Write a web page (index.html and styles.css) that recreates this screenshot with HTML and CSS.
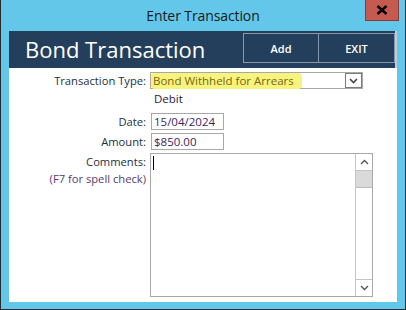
FILE: index.html
```html
<!DOCTYPE html>
<html>
<head>
<meta charset="utf-8">
<link rel="stylesheet" href="styles.css">
</head>
<body>
<div class="window">
  <div class="titlebar">
    <span></span>
    <span class="title">Enter Transaction</span>
    <button class="close" aria-label="Close">
      <svg width="12" height="10" viewBox="0 0 12 10"><path d="M1.5 1 L10.5 9 M10.5 1 L1.5 9" stroke="#000" stroke-width="2.4" fill="none"/></svg>
    </button>
  </div>
  <div class="client">
    <div class="header">
      <h1 class="heading">Bond Transaction</h1>
      <div class="actions">
        <button class="hbtn">Add</button>
        <button class="hbtn">EXIT</button>
      </div>
    </div>
    <div class="form">
      <div class="row row-type">
        <label class="lbl">Transaction Type:</label>
        <div class="combo">
          <span class="combo-val"><span class="hl">Bond Withheld for Arrears</span></span>
          <span class="combo-btn">
            <svg width="9" height="6" viewBox="0 0 9 6"><path d="M1 1 L4.5 4.5 L8 1" stroke="#444" stroke-width="1.6" fill="none"/></svg>
          </span>
        </div>
      </div>
      <div class="row row-debit">
        <span class="lbl"></span>
        <span class="debit">Debit</span>
      </div>
      <div class="row row-date">
        <label class="lbl">Date:</label>
        <div class="tbox">15/04/2024</div>
      </div>
      <div class="row row-amt">
        <label class="lbl">Amount:</label>
        <div class="tbox">$850.00</div>
      </div>
      <div class="row row-comments">
        <div class="lbl lbl-stack">
          <span>Comments:</span>
          <span class="hint">(F7 for spell check)</span>
        </div>
        <div class="memo">
          <div class="memo-text"><span class="caret"></span></div>
          <div class="vscroll">
            <span class="sbtn">
              <svg width="9" height="6" viewBox="0 0 9 6"><path d="M1 5 L4.5 1.5 L8 5" stroke="#555" stroke-width="1.4" fill="none"/></svg>
            </span>
            <span class="thumb"></span>
            <span class="track"></span>
            <span class="sbtn">
              <svg width="9" height="6" viewBox="0 0 9 6"><path d="M1 1 L4.5 4.5 L8 1" stroke="#555" stroke-width="1.4" fill="none"/></svg>
            </span>
          </div>
        </div>
      </div>
    </div>
  </div>
</div>
</body>
</html>
```

FILE: styles.css
```css
* { box-sizing: border-box; }
html, body { margin: 0; padding: 0; }
body {
  width: 406px;
  height: 310px;
  overflow: hidden;
  font-family: "Open Sans", "Noto Sans", sans-serif;
}
.window {
  width: 406px;
  height: 310px;
  background: #63c7ea;
  border-left: 1px solid #2a2e33;
  border-right: 1px solid #2a2e33;
  border-bottom: 1px solid #2a2e33;
  padding: 0 8px 7px 8px;
  display: flex;
  flex-direction: column;
}
.titlebar {
  height: 31px;
  margin: 0 -8px;
  display: grid;
  grid-template-columns: 1fr auto 1fr;
  align-items: start;
}
.title {
  font-size: 14px;
  line-height: 31px;
  color: #1a1a1a;
  letter-spacing: -0.1px;
}
.close {
  justify-self: end;
  margin-right: 6px;
  width: 34px;
  height: 21px;
  background: #c55a50;
  border: 1px solid #8f3a33;
  border-top: none;
  padding: 0;
  display: flex;
  align-items: center;
  justify-content: center;
}
.client {
  flex: 1;
  display: flex;
  flex-direction: column;
  background: #fff;
}
.header {
  height: 37px;
  background: #243f5b;
  border-right: 2px solid #c3ccd6;
  display: flex;
  align-items: flex-start;
  padding-left: 16px;
}
.heading {
  margin: 0;
  align-self: center;
  font-weight: normal;
  font-size: 22px;
  line-height: 37px;
  color: #fff;
}
.actions {
  margin-left: auto;
  margin-top: 2px;
  display: flex;
}
.hbtn {
  width: 76px;
  height: 30px;
  background: transparent;
  border: 1px solid #8598ad;
  color: #fff;
  font-family: inherit;
  font-weight: 600;
  font-size: 11px;
  padding: 0;
}
.hbtn + .hbtn { border-left: none; }
.form {
  flex: 1;
  padding-top: 4px;
  font-size: 11.2px;
  color: #1e2b3b;
}
.row {
  display: flex;
  align-items: center;
}
.lbl {
  width: 137px;
  text-align: right;
  margin-right: 4px;
  color: #22303f;
  flex: none;
}
.combo {
  width: 213px;
  height: 17px;
  border: 1px solid #a8a8a8;
  display: flex;
  align-items: stretch;
}
.combo-val {
  flex: 1;
  display: flex;
  align-items: center;
}
.hl {
  background: #f6f47c;
  color: #7a6514;
  border-radius: 4px;
  padding: 0 8px 0 2px;
  line-height: 16px;
  height: 16px;
  font-size: 11.5px;
}
.combo-btn {
  width: 17px;
  border: 1px solid #7b7b7b;
  display: flex;
  align-items: center;
  justify-content: center;
  background: #fff;
}
.row-debit {
  height: 16px;
  margin-top: 1px;
}
.debit {
  padding-left: 4px;
  color: #2a1a3a;
  font-size: 11.5px;
}
.row-date { margin-top: 7px; }
.row-amt { margin-top: 3px; }
.tbox {
  width: 73px;
  height: 17px;
  margin-left: 1px;
  border: 1px solid #a8a8a8;
  padding-left: 2px;
  line-height: 15px;
  font-size: 11.5px;
  color: #3a2466;
}
.row-comments {
  margin-top: 3px;
  align-items: flex-start;
}
.lbl-stack {
  display: flex;
  flex-direction: column;
  line-height: 17px;
}
.hint { color: #553c70; }
.memo {
  width: 223px;
  height: 144px;
  border: 1px solid #a8a8a8;
  display: flex;
}
.memo-text {
  flex: 1;
  padding: 2px 0 0 2px;
}
.caret {
  display: block;
  width: 1px;
  height: 14px;
  background: #000;
}
.vscroll {
  width: 17px;
  display: flex;
  flex-direction: column;
  border-left: 1px solid #c4c4c4;
  background: #fff;
}
.sbtn {
  height: 17px;
  display: flex;
  align-items: center;
  justify-content: center;
  border-bottom: 1px solid #c4c4c4;
  flex: none;
}
.sbtn:last-child {
  border-bottom: none;
  border-top: 1px solid #c4c4c4;
}
.thumb {
  height: 17px;
  background: #dadada;
  border-bottom: 1px solid #bcbcbc;
  flex: none;
}
.track { flex: 1; }
```
